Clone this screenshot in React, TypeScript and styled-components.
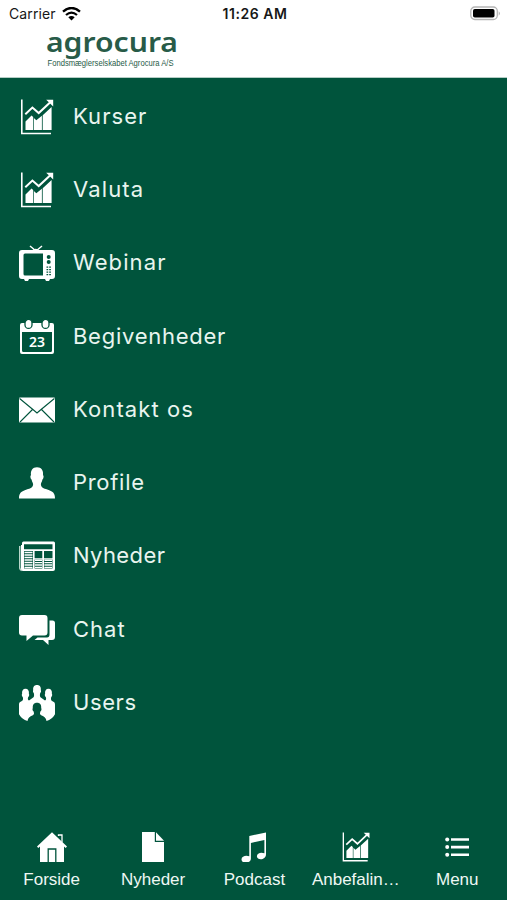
import React from "react";
import styled, { createGlobalStyle } from "styled-components";

const GREEN = "#00543c";

const GlobalStyle = createGlobalStyle`
  * { box-sizing: border-box; }
  body { margin: 0; background: ${GREEN}; }
`;

const Screen = styled.div`
  width: 507px;
  height: 900px;
  display: flex;
  flex-direction: column;
  background: ${GREEN};
  color: #fff;
  overflow: hidden;
`;

const Header = styled.header`
  height: 78px;
  flex: none;
  background: #fff;
  border-bottom: 1px solid #b5cdc5;
`;

const StatusBar = styled.div`
  height: 28px;
  padding: 0 6px 0 9px;
  display: grid;
  grid-template-columns: 1fr auto 1fr;
  align-items: center;
  font: 400 14px/28px Inter, sans-serif;
  color: #171717;
`;

const Carrier = styled.div`
  display: flex;
  align-items: center;
  gap: 6px;
  letter-spacing: 0.1px;
`;

const Clock = styled.div`
  font-weight: 600;
  letter-spacing: 0.55px;
`;

const Battery = styled.div`
  display: flex;
  justify-content: flex-end;
`;

const Brand = styled.div`
  margin-left: 46px;
  height: 46px;
`;

const MenuList = styled.nav`
  flex: 1;
  padding-top: 2px;
`;

const MenuRow = styled.a`
  height: 73.3px;
  padding-left: 19px;
  display: flex;
  align-items: center;
  gap: 18px;
`;

const MenuLabel = styled.span<{ $spacing: number }>`
  padding-bottom: 2px;
  font: 400 22px/30px Inter, sans-serif;
  letter-spacing: ${(p) => p.$spacing}px;
  color: #e9f5ef;
  white-space: nowrap;
`;

const TabBar = styled.nav`
  height: 70px;
  flex: none;
  padding-left: 1px;
  display: grid;
  grid-template-columns: repeat(5, 101.4px);
`;

const Tab = styled.a`
  display: flex;
  flex-direction: column;
  align-items: center;
  padding-top: 2px;
`;

const TabLabel = styled.span`
  margin-top: 7px;
  font: 400 17px/21px "Liberation Sans", sans-serif;
  color: #eff8f4;
`;

const Icon = styled.svg<{ $size: number }>`
  width: ${(p) => p.$size}px;
  height: ${(p) => p.$size}px;
  flex: none;
  display: block;
  fill: #fff;
`;

type IconProps = { size?: number };

const Chart = ({ size = 36 }: IconProps) => (
  <Icon $size={size} viewBox="0 0 36 36">
    <path d="M2 .5h1.6v33.2H32v1.6H2z" />
    <path d="M6.500 22.500l6-6 1.700 1.600v13H6.500zM14.900 19l2.400 2.300 5.600-4.600v14.400h-8zM23.700 16.200L32.600 8v23.100h-8.900z" />
    <path d="M6.3 15.2l7.1-6.6 6.3 5.500L31 3.400" fill="none" stroke="#fff" strokeWidth="2" />
    <path d="M27.200.8h7v6.800z" />
  </Icon>
);

const Television = () => (
  <Icon $size={36} viewBox="0 0 36 36">
    <path d="M11 1l6 5M23 1l-6 5" stroke="#fff" strokeWidth="1.5" />
    <path d="M12.500 5.800q4.200-4 8.400 0z" />
    <path fillRule="evenodd" d="M3 5h30q3 0 3 3v23q0 3-3 3h-2l-1 2h-3l-1-2H10l-1 2H6l-1-2H3q-3 0-3-3V8q0-3 3-3zm3 3.500Q4.500 8.500 4.500 10v19Q4.500 30.500 6 30.500h18V8.500z" />
    <g fill={GREEN}>
      <circle cx="29.700" cy="12" r="2" />
      <circle cx="29.700" cy="17" r="2" />
      <path d="M27.500 21.500h1.700v1.300h-1.700zm2.700 0h1.700v1.300h-1.700zM27.500 24h1.700v1.300h-1.700zm2.700 0h1.700v1.300h-1.700zM27.500 26.500h1.700v1.300h-1.700zm2.700 0h1.700v1.300h-1.700zM27.500 29h1.700v1.300h-1.700zm2.700 0h1.700v1.300h-1.700z" />
    </g>
  </Icon>
);

const Calendar = () => (
  <Icon $size={36} viewBox="0 0 36 36">
    <path fillRule="evenodd" d="M3 4h30q2 0 2 2v27q0 2-2 2H3q-2 0-2-2V6q0-2 2-2zm0 9v18.500q0 1.500 1.500 1.500h27q1.500 0 1.500-1.500V13z" />
    <g stroke={GREEN} strokeWidth="1.300">
      <rect x="6" y=".4" width="7" height="9" rx="3.500" />
      <rect x="23" y=".4" width="7" height="9" rx="3.500" />
    </g>
    <text x="18" y="28" textAnchor="middle" fontFamily="Noto Sans, sans-serif" fontWeight="600" fontSize="14">23</text>
  </Icon>
);

const Envelope = () => (
  <Icon $size={36} viewBox="0 0 36 36">
    <rect y="5.500" width="36" height="25" rx="1" />
    <path d="M.6 6.500L14.500 18 18 21l3.500-3L35.400 6.500M1 30l12.500-12.500M35 30L22.500 17.500" fill="none" stroke={GREEN} strokeWidth="1.100" />
  </Icon>
);

const Person = () => (
  <Icon $size={36} viewBox="0 0 36 36">
    <path d="M18 2.200c4.500 0 6.600 3.300 6 8 1.100.4.500 3.800-.6 4.300-.4 2.600-1.500 3.400-1.500 4.700 0 3.300 2.700 4 6.400 5.300 5.500 1.900 7.700 3.300 7.700 9H0c0-5.700 2.200-7.100 7.700-9 3.700-1.300 6.400-2 6.400-5.300 0-1.300-1.100-2.100-1.500-4.700-1.100-.5-1.700-3.900-.6-4.300-.6-4.700 1.500-8 6-8z" />
  </Icon>
);

const Newspaper = () => (
  <Icon $size={36} viewBox="0 0 36 36">
    <path d="M.7 8v21.500q0 2 2 3" fill="none" stroke="#b9d6ca" strokeWidth="1.500" />
    <path fillRule="evenodd" d="M4.500 3.500h30q1.500 0 1.500 1.500v26q0 2-2 2H4q-2 0-2-2V7h1V5q0-1.500 1.500-1.500zM5 6.200v5h28.500v-5zM5 13v17.500h9V13zM15.600 13v7.200h7.700V13zM25 13v7.200h8.500V13zM15.600 21.500v9h7.700v-9zM25 21.500v9h8.500v-9z" />
    <path d="M5.500 14.500h8M5.500 17h8M5.500 19.500h8M5.500 22h8M5.500 24.500h8M5.500 27h8M5.500 29.500h8M16 22.200h7M16 24.600h7M16 27h7M16 29.400h7M25.400 22.200h7.700M25.400 24.600h7.700M25.400 27h7.700M25.400 29.400h7.700" stroke="#fff" strokeWidth="1.400" />
  </Icon>
);

const Chat = () => (
  <Icon $size={36} viewBox="0 0 36 36">
    <path d="M30.500 8.500h3Q36 8.500 36 11v14q0 3-3 3h-3.500v5L24 28h-8.500l3-2.500H28q2.500 0 2.500-3z" />
    <path d="M3 3h22.500q3 0 3 3v14.500q0 3-3 3H14L7.500 29v-5.500H3q-3 0-3-3V6q0-3 3-3z" />
  </Icon>
);

const Users = () => (
  <Icon $size={36} viewBox="0 0 36 36">
    <path d="M18 0c3 0 4.200 2.200 3.800 5.200.6.500.1 2.500-.6 2.900-.6 2.800-.4 4.300 1.300 5l3.500 2.400c1.200-.7 1.400-1.500.8-3.500-.9-.5-1.400-2.500-.7-3-.4-3.200.9-5.200 3.400-5.200S33.300 5.800 32.900 9c.7.500.2 2.500-.7 3-.7 3 .1 4 2.200 4.700 1.200.5 1.600 1.400 1.600 3v9.500Q33 34.500 27.500 36c-.4-3.300-2.100-4.300-5.300-5.800-1.500-.7-1.500-1.500-.7-3.900 1-.5 1.300-2.600.7-3.100.3-3.200-1-5.400-4.200-5.400s-4.500 2.200-4.200 5.400c-.6.500-.3 2.600.7 3.100.8 2.400.8 3.200-.7 3.900-3.200 1.500-4.900 2.500-5.300 5.800Q3 34.500 0 29.200v-9.500c0-1.600.4-2.500 1.600-3C3.700 16 4.500 15 3.800 12c-.9-.5-1.400-2.500-.7-3-.4-3.200.9-5.200 3.400-5.200S10.300 5.800 9.900 9c.7.500.2 2.500-.7 3-.6 2-.4 2.800.8 3.500l3.500-2.400c1.700-.7 1.900-2.200 1.300-5-.7-.4-1.200-2.400-.6-2.900C13.800 2.200 15 0 18 0z" />
  </Icon>
);

const House = () => (
  <Icon $size={30} viewBox="0 0 30 30">
    <path d="M15 .2L30 14.500l-1.300 1.400-1.700-1.300V30H3V14.600l-1.700 1.300L0 14.500z" />
    <path d="M21.500 4V3h3.500v7.400" fill="none" stroke="#fff" strokeWidth="1.300" />
    <path d="M11.200 30V17h7.600v13" fill="none" stroke={GREEN} strokeWidth="1.300" />
  </Icon>
);

const Page = () => (
  <Icon $size={30} viewBox="0 0 30 30">
    <path d="M4 0h12.800v10h9.200v20H4z" />
    <path d="M18 .3l8 8.400h-8z" />
  </Icon>
);

const Notes = () => (
  <Icon $size={30} viewBox="0 0 30 30">
    <path d="M10.300 4L27 .5v21.800c0 6.200-9.100 6.300-9.100 2 0-3.300 4.200-4.300 7.500-3V8L11.900 10.900v15.500c0 5.500-9.400 5.300-9.400 1 0-3.400 4.600-4.500 7.800-3.200z" />
  </Icon>
);

const ListIcon = () => (
  <Icon $size={30} viewBox="0 0 30 30">
    <path d="M9 6.200h18v2.600H9zm0 7.600h18v2.600H9zm0 7.600h18V24H9z" />
    <circle cx="5.200" cy="7.500" r="2" />
    <circle cx="5.200" cy="15.100" r="2" />
    <circle cx="5.200" cy="22.700" r="2" />
  </Icon>
);

const Wifi = () => (
  <svg width="19" height="14" viewBox="0 0 19 14" fill="none" stroke="#000" strokeWidth="2.300">
    <path d="M1 4.700q8.500-7.500 17 0M4 8q5.500-4.700 11 0" />
    <path d="M6.300 10.300q3.200-2.500 6.400 0l-3.200 3.200z" fill="#000" stroke="none" />
  </svg>
);

const BatteryIcon = () => (
  <svg width="31" height="16" viewBox="0 0 31 16">
    <rect x=".8" y="1" width="26.500" height="12.500" rx="4" fill="#fff" stroke="#b5b5b5" strokeWidth="1.300" />
    <rect x="3" y="3" width="21.500" height="8.500" rx="1.800" fill="#000" />
    <path d="M28.700 5.300q2.500 2.200 0 4.400z" fill="#b5b5b5" />
  </svg>
);

const Logo = () => (
  <svg width="150" height="46" viewBox="0 0 150 46" fill="#285b48">
    <text x="0" y="23.500" fontFamily="Noto Sans, sans-serif" fontWeight="600" fontSize="27" textLength="132" lengthAdjust="spacingAndGlyphs">agrocura</text>
    <text x="1.500" y="38" fontFamily="Liberation Sans, sans-serif" fontSize="9" textLength="126" lengthAdjust="spacingAndGlyphs">Fondsmæglerselskabet Agrocura A/S</text>
  </svg>
);

const menu = [
  { label: "Kurser", icon: <Chart />, spacing: 1.05 },
  { label: "Valuta", icon: <Chart />, spacing: 1.15 },
  { label: "Webinar", icon: <Television />, spacing: 1.1 },
  { label: "Begivenheder", icon: <Calendar />, spacing: 0.73 },
  { label: "Kontakt os", icon: <Envelope />, spacing: 1.1 },
  { label: "Profile", icon: <Person />, spacing: 0.7 },
  { label: "Nyheder", icon: <Newspaper />, spacing: 0.4 },
  { label: "Chat", icon: <Chat />, spacing: 1 },
  { label: "Users", icon: <Users />, spacing: 0.6 },
];

const tabs = [
  { label: "Forside", icon: <House /> },
  { label: "Nyheder", icon: <Page /> },
  { label: "Podcast", icon: <Notes /> },
  { label: "Anbefalin…", icon: <Chart size={30} /> },
  { label: "Menu", icon: <ListIcon /> },
];

export default function App() {
  return (
    <Screen>
      <GlobalStyle />
      <Header>
        <StatusBar>
          <Carrier>Carrier<Wifi /></Carrier>
          <Clock>11:26 AM</Clock>
          <Battery><BatteryIcon /></Battery>
        </StatusBar>
        <Brand><Logo /></Brand>
      </Header>
      <MenuList>
        {menu.map((m) => (
          <MenuRow key={m.label}>
            {m.icon}
            <MenuLabel $spacing={m.spacing}>{m.label}</MenuLabel>
          </MenuRow>
        ))}
      </MenuList>
      <TabBar>
        {tabs.map((t) => (
          <Tab key={t.label}>
            {t.icon}
            <TabLabel>{t.label}</TabLabel>
          </Tab>
        ))}
      </TabBar>
    </Screen>
  );
}
